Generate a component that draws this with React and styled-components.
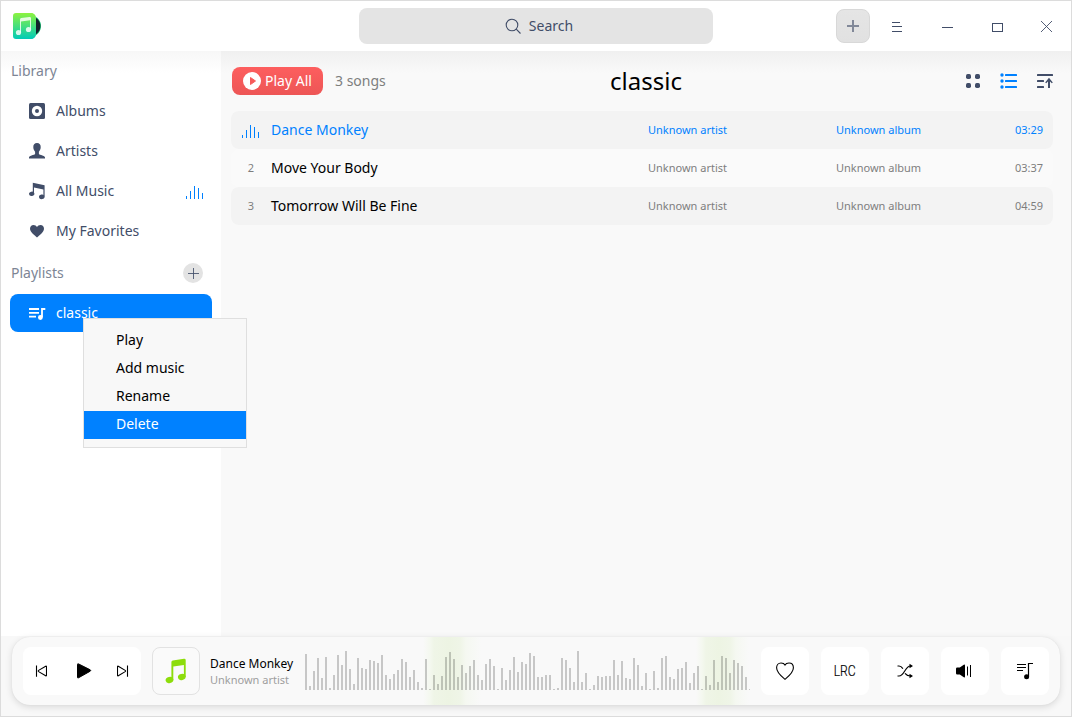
import React from 'react';
import styled, { createGlobalStyle, css } from 'styled-components';

const INK = '#414d68';
const BLUE = '#0081ff';

const GlobalStyle = createGlobalStyle`
  *, *::before, *::after { box-sizing: border-box; }
  body { margin: 0; font-family: 'Noto Sans', sans-serif; font-size: 14px; line-height: 20px; color: #000; }
  svg { display: block; flex: none; }
`;

const Window = styled.div`
  position: relative;
  display: flex;
  flex-direction: column;
  width: 1072px;
  height: 717px;
  border: 1px solid #dcdcdc;
  background: #f8f8f8;
  overflow: hidden;
  white-space: nowrap;
`;

const TitleBar = styled.header`
  display: grid;
  grid-template-columns: 358px 354px 1fr;
  align-items: center;
  height: 50px;
  flex: none;
  background: #fff;
`;

const LogoBox = styled.div`
  padding-left: 11px;
`;

const SearchBox = styled.div`
  display: flex;
  align-items: center;
  justify-content: center;
  gap: 7px;
  height: 36px;
  padding-left: 6px;
  border-radius: 8px;
  background: #e4e4e4;
  color: ${INK};
`;

const WindowControls = styled.div`
  display: flex;
  align-items: center;
  justify-content: flex-end;
`;

const AddButton = styled.div`
  display: flex;
  align-items: center;
  justify-content: center;
  width: 34px;
  height: 34px;
  margin-right: 2px;
  border: 1px solid #d8d8d8;
  border-radius: 8px;
  background: linear-gradient(#e5e5e5, #e1e1e1);
`;

const ControlButton = styled.div`
  display: flex;
  align-items: center;
  justify-content: center;
  width: ${(p) => p.$width || 50}px;
  height: 50px;
`;

const Body = styled.div`
  display: flex;
  height: 585px;
  flex: none;
`;

const Sidebar = styled.nav`
  width: 220px;
  flex: none;
  padding: 0 9px;
  background: linear-gradient(#f7f7f7, #fff 22px);
`;

const SectionTitle = styled.div`
  display: flex;
  align-items: center;
  justify-content: space-between;
  height: ${(p) => p.$height}px;
  margin-bottom: ${(p) => p.$gap || 0}px;
  padding: 0 9px 0 1px;
  color: #7d8595;
`;

const RoundAdd = styled.div`
  display: flex;
  align-items: center;
  justify-content: center;
  width: 20px;
  height: 20px;
  border-radius: 50%;
  background: #e3e3e3;
`;

const NavItem = styled.div`
  display: flex;
  align-items: center;
  gap: 10px;
  height: 38px;
  margin-bottom: 2px;
  padding: 0 8px 0 18px;
  border-radius: 8px;
  color: ${INK};
  ${(p) => p.$active && css`background: ${BLUE}; color: #fff;`}
`;

const NavLabel = styled.span`
  flex: 1;
`;

const NavLevels = styled.span`
  padding-top: 2px;
`;

const Content = styled.main`
  flex: 1;
  padding: 15px 18px 0 10px;
  background: linear-gradient(#f0f0f0, #f9f9f9 22px);
`;

const Toolbar = styled.div`
  display: grid;
  grid-template-columns: 1fr auto 1fr;
  align-items: center;
  height: 30px;
  padding-left: 1px;
`;

const ToolbarStart = styled.div`
  display: flex;
  align-items: center;
  gap: 12px;
  color: #7e7e7e;
`;

const PlayAll = styled.div`
  display: flex;
  align-items: center;
  gap: 4px;
  width: 91px;
  height: 28px;
  padding-left: 11px;
  border-radius: 8px;
  background: linear-gradient(#fd5e5e, #ed5656);
  color: #fff;
`;

const Heading = styled.h1`
  margin: 0;
  padding-left: 7px;
  font-size: 24px;
  line-height: 30px;
  font-weight: 400;
`;

const ToolbarEnd = styled.div`
  display: flex;
  justify-content: flex-end;
  gap: 18px;
  margin-right: -1px;
`;

const SongList = styled.div`
  margin-top: 15px;
`;

const SongRow = styled.div`
  display: grid;
  grid-template-columns: 40px 377px 188px 1fr auto;
  align-items: center;
  height: 38px;
  padding-right: 10px;
  border-radius: 8px;
  background: ${(p) => (p.$striped ? '#f3f3f3' : '#fafafa')};
  color: ${(p) => (p.$playing ? BLUE : '#000')};
`;

const SongIndex = styled.div`
  display: flex;
  justify-content: center;
  padding-top: ${(p) => (p.$playing ? 2 : 0)}px;
  font-size: 11px;
  color: #7e7e7e;
`;

const SongMeta = styled.span`
  font-size: 11px;
  color: ${(p) => (p.$playing ? BLUE : '#7e7e7e')};
`;

const Menu = styled.div`
  position: absolute;
  left: 82px;
  top: 317px;
  width: 164px;
  height: 130px;
  padding: 8px 0;
  border: 1px solid #dfdfdf;
  background: #f8f8f8;
`;

const MenuItem = styled.div`
  height: 28px;
  padding-left: 32px;
  line-height: 26px;
  ${(p) => p.$active && css`background: ${BLUE}; color: #fff;`}
`;

const Footer = styled.footer`
  height: 80px;
  flex: none;
  padding: 1px 11px 0;
`;

const PlayerBar = styled.div`
  display: flex;
  align-items: center;
  height: 68px;
  padding: 0 11px;
  border-radius: 18px;
  background: #f9f9f9;
  box-shadow: 0 2px 7px rgba(0, 0, 0, 0.13), 0 0 1px rgba(0, 0, 0, 0.1);
`;

const Transport = styled.div`
  display: grid;
  grid-template-columns: 41px 41px 12px;
  align-items: center;
  width: 118px;
  height: 48px;
  padding-left: 12px;
  border-radius: 8px;
  background: #fff;
`;

const Cover = styled.div`
  display: flex;
  align-items: center;
  justify-content: center;
  width: 48px;
  height: 48px;
  flex: none;
  margin-left: 11px;
  border: 1px solid #e2e2e2;
  border-radius: 8px;
  background: #fafafa;
`;

const NowPlaying = styled.div`
  width: 105px;
  flex: none;
  padding: 2px 0 0 10px;
  font-size: 12px;
  line-height: 16px;
`;

const NowArtist = styled.div`
  font-size: 11px;
  color: #9e9e9e;
`;

const WaveArea = styled.div`
  width: 445px;
  flex: none;
  height: 68px;
  background:
    linear-gradient(90deg, transparent 118px, #f4f8ef 125px, #eff5e7 129px, #edf4e3 144px, #eff5e7 155px, #f5f8f1 161px, transparent 176px),
    linear-gradient(90deg, transparent 391px, #f4f8ef 397px, #eff5e7 401px, #edf4e3 414px, #eff5e7 425px, #f5f8f1 431px, transparent 444px);
`;

const Actions = styled.div`
  display: flex;
  gap: 12px;
  margin-left: auto;
`;

const ActionButton = styled.div`
  display: flex;
  align-items: center;
  justify-content: center;
  width: 48px;
  height: 48px;
  border-radius: 8px;
  background: #fff;
`;

const LyricsLabel = styled.span`
  font-family: Roboto, sans-serif;
  font-size: 14px;
  font-weight: 300;
  -webkit-text-stroke: 0.2px #000;
  transform: scaleX(0.87);
`;

const waveHeights = [
  36, 4, 19, 32, 12, 33, 2, 15, 35, 25, 39, 21, 6, 32, 22, 21, 30, 29, 27, 35, 15, 11, 16, 20, 31, 28, 13, 20,
  8, 2, 31, 1, 15, 6, 14, 33, 38, 31, 13, 25, 17, 24, 30, 15, 10, 26, 31, 24, 1, 22, 10, 20, 33, 18, 28, 26,
  37, 34, 13, 13, 15, 15, 1, 2, 32, 30, 22, 8, 39, 8, 17, 1, 5, 14, 13, 14, 14, 30, 15, 29, 12, 11, 32, 25,
  4, 17, 1, 19, 2, 32, 34, 13, 11, 21, 22, 28, 7, 17, 24, 1, 14, 5, 30, 8, 34, 32, 17, 30, 27, 24, 13, 1,
];

const Waveform = () => (
  <svg width="445" height="68" shapeRendering="crispEdges">
    {waveHeights.map((h, i) => (
      <rect key={i} x={i * 4} y={53 - h} width="2" height={h} fill="#000" fillOpacity="0.2" />
    ))}
  </svg>
);

const Logo = () => (
  <svg width="30" height="28" viewBox="0 0 30 28">
    <defs>
      <linearGradient id="logo" x1="0" y1="0" x2="0" y2="1">
        <stop offset="0" stopColor="#8cf33f" />
        <stop offset="0.55" stopColor="#3fdd83" />
        <stop offset="1" stopColor="#00cbb8" />
      </linearGradient>
    </defs>
    <path d="M20 3.5C26 4.500 29 9.500 29 14S26 23.500 20 25Z" fill="#20c67a" />
    <path d="M20 4C25.700 6 28.400 9.500 28.400 14S25.700 22 20 24.500Z" fill="#12202b" />
    <path d="M4 1H19.500C22 1 24 3.500 24 6V22C24 24.500 22 27 19.500 27H4Q1 27 1 24V4Q1 1 4 1Z" fill="url(#logo)" />
    <g fill="#fff" fillOpacity="0.82">
      <circle cx="6.500" cy="20.500" r="2.600" />
      <circle cx="16.500" cy="17.500" r="2.600" />
      <path d="M8 20.500V7.500Q8 6.300 9.200 6.100L17.500 5Q19 4.900 19 6.200V17.500H18V8.300L9 9.500V20.500Z" />
    </g>
  </svg>
);

const SearchIcon = () => (
  <svg width="17" height="17" viewBox="0 0 17 17" fill="none" stroke={INK} strokeWidth="1.1">
    <circle cx="7" cy="7" r="5.800" />
    <path d="M11.200 11.200L15.500 15.500" />
  </svg>
);

const PlusIcon = ({ size, width, opacity }) => (
  <svg width={size} height={size} viewBox={`0 0 ${size} ${size}`} stroke={INK} strokeWidth={width} strokeOpacity={opacity}>
    <path d={`M0 ${size / 2}H${size}M${size / 2} 0V${size}`} />
  </svg>
);

const Glyph = ({ d }) => (
  <svg width="12" height="12" viewBox="0 0 12 12" fill="none" stroke={INK} shapeRendering="crispEdges">
    <path d={d} />
  </svg>
);

const AlbumIcon = () => (
  <svg width="18" height="18" viewBox="0 0 18 18">
    <rect x="1" y="1" width="16" height="16" rx="1.500" fill={INK} />
    <circle cx="9" cy="9" r="5.200" fill="#fff" />
    <circle cx="9" cy="9" r="2" fill={INK} />
  </svg>
);

const ArtistIcon = () => (
  <svg width="18" height="18" viewBox="0 0 18 18" fill={INK}>
    <path d="M9 1C11.500 1 12.900 2.800 12.700 5.300C12.600 7.300 11.900 8.700 10.900 9.700V12C12 13.200 16 13.300 17 15.200V16.500H1V15.200C2 13.300 6 13.200 7.100 12V9.700C6.100 8.700 5.400 7.300 5.300 5.300C5.100 2.800 6.500 1 9 1Z" />
  </svg>
);

const MusicIcon = () => (
  <svg width="18" height="18" viewBox="0 0 18 18" fill={INK}>
    <path d="M4.800 .800L16.600 3.200V14.500H15.400V7.500L6 5.500V11.500H4.800Z" />
    <ellipse cx="3.700" cy="11.800" rx="2.700" ry="2.200" transform="rotate(-12 3.700 11.800)" />
    <ellipse cx="13.800" cy="14.800" rx="2.800" ry="2.300" transform="rotate(-12 13.800 14.800)" />
  </svg>
);

const HeartFilled = () => (
  <svg width="18" height="18" viewBox="0 0 18 18" fill={INK}>
    <path d="M9 15.500C7 13.600 2 10.300 2 6.800C2 4.600 3.500 3 5.500 3C7 3 8.300 3.800 9 5C9.700 3.800 11 3 12.500 3C14.500 3 16 4.600 16 6.800C16 10.300 11 13.600 9 15.500Z" />
  </svg>
);

const PlaylistIcon = () => (
  <svg width="18" height="18" viewBox="0 0 18 18" fill="none" stroke="#fff" strokeWidth="1.800">
    <path d="M1 5H11M1 8.800H11M1 12.600H8M17.300 5H14V13" />
    <circle cx="12.400" cy="13.500" r="2.400" fill="#fff" stroke="none" />
  </svg>
);

const LevelsIcon = () => (
  <svg width="18" height="14" viewBox="0 0 18 14" fill={BLUE} shapeRendering="crispEdges">
    <path d="M0 11h1v3h-1zM4 6h1v8h-1zM8 1h1v13h-1zM12 3h1v11h-1zM16 8h1v6h-1z" />
  </svg>
);

const PlayDisc = () => (
  <svg width="18" height="18" viewBox="0 0 18 18">
    <circle cx="9" cy="9" r="9" fill="#fff" />
    <path d="M7.500 5.500L12.500 9L7.500 12.500Z" fill="#f75b5b" stroke="#f75b5b" strokeLinejoin="round" />
  </svg>
);

const GridIcon = () => (
  <svg width="18" height="18" viewBox="0 0 18 18" fill={INK}>
    <rect x="2" y="2" width="5" height="5" rx="1.700" />
    <rect x="11" y="2" width="5" height="5" rx="1.700" />
    <rect x="2" y="11" width="5" height="5" rx="1.700" />
    <rect x="11" y="11" width="5" height="5" rx="1.700" />
  </svg>
);

const ListIcon = () => (
  <svg width="18" height="18" viewBox="0 0 18 18" fill={BLUE}>
    {[3, 9, 15].map((y) => (
      <g key={y}>
        <circle cx="2" cy={y} r="1.700" />
        <rect x="5" y={y - 1} width="12" height="2" rx="0.500" />
      </g>
    ))}
  </svg>
);

const SortIcon = () => (
  <svg width="18" height="18" viewBox="0 0 18 18" fill={INK}>
    <rect x="1" y="2" width="16" height="2" rx="0.500" />
    <rect x="1" y="8" width="7" height="2" rx="0.500" />
    <rect x="1" y="14" width="7" height="2" rx="0.500" />
    <path d="M13 5.700L16.800 10.500L15.800 11.200L14 9.500V16H12V9.500L10.200 11.200L9.200 10.500Z" />
  </svg>
);

const PrevIcon = () => (
  <svg width="12" height="12" viewBox="0 0 12 12" fill="none" stroke="#000" strokeWidth="1.100" strokeLinejoin="round">
    <path d="M1.500 .500V11.700M11.500 1.700V10.300Q11.500 11.200 10.700 10.800L3.600 6.600Q2.800 6 3.600 5.400L10.700 1.200Q11.500 .800 11.500 1.700Z" />
  </svg>
);

const NextIcon = () => (
  <svg width="12" height="12" viewBox="0 0 12 12" fill="none" stroke="#000" strokeWidth="1.100" strokeLinejoin="round">
    <path d="M10.500 .500V11.700M.5 1.700V10.300Q.5 11.200 1.300 10.800L8.200 6.600Q9 6 8.200 5.400L1.300 1.200Q.5 .800 .5 1.700Z" />
  </svg>
);

const PlayIcon = () => (
  <svg width="16" height="16" viewBox="0 0 16 16">
    <path d="M1.500 1.500Q1.500 .400 2.500 .900L14.200 6.800Q15.200 7.500 14.200 8.200L2.500 14.800Q1.500 15.300 1.500 14.200Z" fill="#000" stroke="#000" />
  </svg>
);

const CoverNote = () => (
  <svg width="22" height="26" viewBox="0 0 22 26" fill="#8ddd0b">
    <ellipse cx="4.500" cy="22" rx="3.900" ry="3" transform="rotate(-15 4.500 22)" />
    <ellipse cx="16.800" cy="19" rx="3.900" ry="3" transform="rotate(-15 16.800 19)" />
    <path d="M6.400 22V4.200Q6.400 2.800 7.800 2.500L19 .800Q20.700 .600 20.700 2.200V19H18.900V7L8.300 8.600V22Z" />
  </svg>
);

const HeartOutline = () => (
  <svg width="20" height="20" viewBox="0 0 20 20" fill="none" stroke="#000" strokeWidth="1.100">
    <path d="M10 18.300C8.200 16.800 1.600 11.900 1.600 6.800C1.600 4 3.400 2 6 2C8 2 9.300 2.600 10 4C10.700 2.600 12 2 14 2C16.600 2 18.400 4 18.400 6.800C18.400 11.900 11.800 16.800 10 18.300Z" />
  </svg>
);

const ShuffleIcon = () => (
  <svg width="18" height="16" viewBox="0 0 18 16" fill="none" stroke="#000" strokeWidth="1.200">
    <path d="M1.500 3H3C4.700 3 5.900 4.200 6.900 5.600M1.500 13H3C8.500 13 9 3 14.500 3H15M9 10.400C10.200 12 11.700 13 14.500 13H15" />
    <path d="M13.500 .800L17 3L13.500 5.200ZM13.500 10.800L17 13L13.500 15.200Z" fill="#000" stroke="none" />
  </svg>
);

const VolumeIcon = () => (
  <svg width="18" height="14" viewBox="0 0 18 14">
    <path d="M0 4.800Q0 3.600 1.200 3.600H3.800L7.800 .800Q9 .100 9 1.500V12.500Q9 13.900 7.800 13.200L3.800 10.400H1.200Q0 10.400 0 9.200Z" />
    <path d="M11.500 2.500V11.500M14.500 1V13" stroke="#000" />
  </svg>
);

const QueueIcon = () => (
  <svg width="18" height="18" viewBox="0 0 18 18" fill="none" stroke="#000" strokeWidth="1.200">
    <path d="M1 2.500H10M1 5.500H10M1 8.500H7M17 1.500H12.500V14.500" />
    <circle cx="10.600" cy="14.700" r="2.500" fill="#000" stroke="none" />
  </svg>
);

const songs = [
  { title: 'Dance Monkey', time: '03:29' },
  { title: 'Move Your Body', time: '03:37' },
  { title: 'Tomorrow Will Be Fine', time: '04:59' },
];

export default function App() {
  return (
    <>
      <GlobalStyle />
      <Window>
        <TitleBar>
          <LogoBox><Logo /></LogoBox>
          <SearchBox><SearchIcon />Search</SearchBox>
          <WindowControls>
            <AddButton><PlusIcon size={12} width={2} opacity={0.6} /></AddButton>
            <ControlButton><Glyph d="M1 2.500H9M1 6.500H11M1 11.500H11" /></ControlButton>
            <ControlButton><Glyph d="M1 7.500H12" /></ControlButton>
            <ControlButton><Glyph d="M1.500 3.500H11.500V11.500H1.500Z" /></ControlButton>
            <ControlButton $width={49}>
              <svg width="12" height="12" viewBox="0 0 12 12" stroke={INK} strokeWidth="0.900"><path d="M0 1L11 12M11 1L0 12" /></svg>
            </ControlButton>
          </WindowControls>
        </TitleBar>
        <Body>
          <Sidebar>
            <SectionTitle $height={39} $gap={2}>Library</SectionTitle>
            <NavItem><AlbumIcon /><NavLabel>Albums</NavLabel></NavItem>
            <NavItem><ArtistIcon /><NavLabel>Artists</NavLabel></NavItem>
            <NavItem><MusicIcon /><NavLabel>All Music</NavLabel><NavLevels><LevelsIcon /></NavLevels></NavItem>
            <NavItem><HeartFilled /><NavLabel>My Favorites</NavLabel></NavItem>
            <SectionTitle $height={42}>Playlists<RoundAdd><PlusIcon size={11} width={1} opacity={0.85} /></RoundAdd></SectionTitle>
            <NavItem $active><PlaylistIcon /><NavLabel>classic</NavLabel></NavItem>
          </Sidebar>
          <Content>
            <Toolbar>
              <ToolbarStart><PlayAll><PlayDisc />Play All</PlayAll>3 songs</ToolbarStart>
              <Heading>classic</Heading>
              <ToolbarEnd><GridIcon /><ListIcon /><SortIcon /></ToolbarEnd>
            </Toolbar>
            <SongList>
              {songs.map((song, i) => (
                <SongRow key={song.title} $striped={i % 2 === 0} $playing={i === 0}>
                  <SongIndex $playing={i === 0}>{i === 0 ? <LevelsIcon /> : i + 1}</SongIndex>
                  <span>{song.title}</span>
                  <SongMeta $playing={i === 0}>Unknown artist</SongMeta>
                  <SongMeta $playing={i === 0}>Unknown album</SongMeta>
                  <SongMeta $playing={i === 0}>{song.time}</SongMeta>
                </SongRow>
              ))}
            </SongList>
          </Content>
        </Body>
        <Footer>
          <PlayerBar>
            <Transport><PrevIcon /><PlayIcon /><NextIcon /></Transport>
            <Cover><CoverNote /></Cover>
            <NowPlaying>Dance Monkey<NowArtist>Unknown artist</NowArtist></NowPlaying>
            <WaveArea><Waveform /></WaveArea>
            <Actions>
              <ActionButton><HeartOutline /></ActionButton>
              <ActionButton><LyricsLabel>LRC</LyricsLabel></ActionButton>
              <ActionButton><ShuffleIcon /></ActionButton>
              <ActionButton><VolumeIcon /></ActionButton>
              <ActionButton><QueueIcon /></ActionButton>
            </Actions>
          </PlayerBar>
        </Footer>
        <Menu>
          <MenuItem>Play</MenuItem>
          <MenuItem>Add music</MenuItem>
          <MenuItem>Rename</MenuItem>
          <MenuItem $active>Delete</MenuItem>
        </Menu>
      </Window>
    </>
  );
}
